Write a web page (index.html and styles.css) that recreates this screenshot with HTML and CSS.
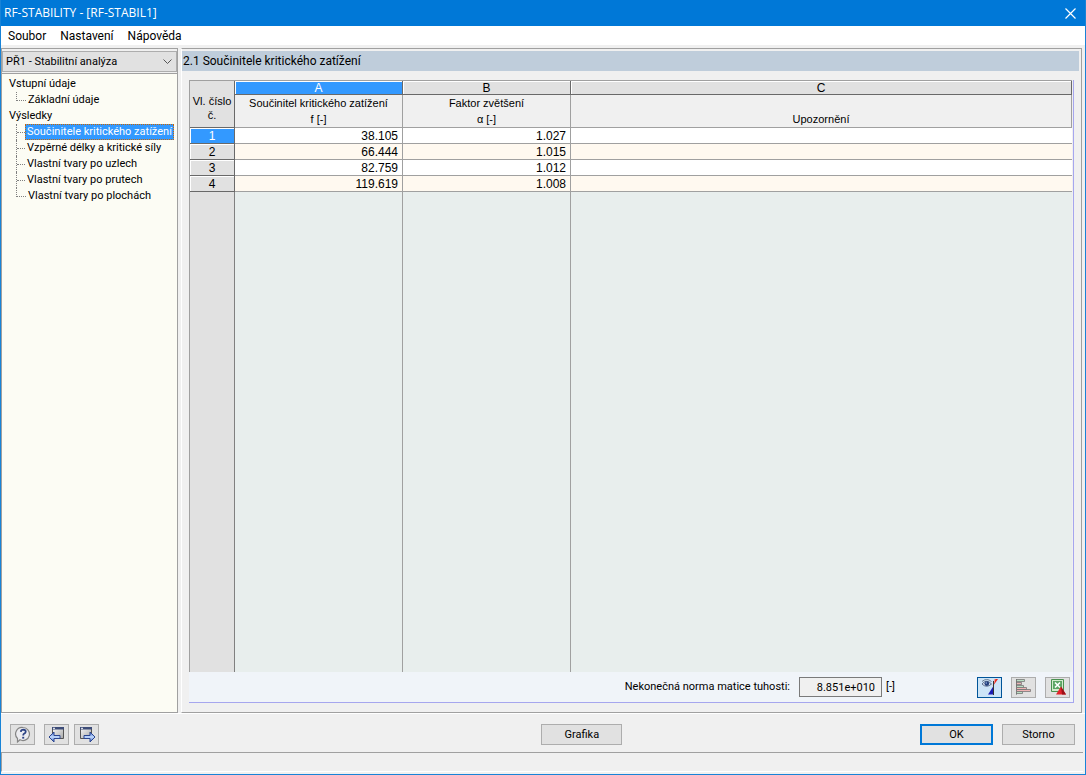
FILE: index.html
```html
<!DOCTYPE html>
<html lang="cs">
<head>
<meta charset="utf-8">
<title>RF-STABILITY - [RF-STABIL1]</title>
<link rel="stylesheet" href="styles.css">
</head>
<body>
<div class="window">
  <header class="titlebar">
    <h1 class="title">RF-STABILITY - [RF-STABIL1]</h1>
    <button class="close" type="button" aria-label="Zavřít">
      <svg width="11" height="11" viewBox="0 0 11 11"><path d="M.5.5l10 10M10.500.5l-10 10" stroke="#fff" stroke-width="1.200"/></svg>
    </button>
  </header>
  <nav class="menubar">
    <button type="button">Soubor</button>
    <button type="button">Nastavení</button>
    <button type="button">Nápověda</button>
  </nav>

  <div class="workspace">
    <aside class="sidebar">
      <div class="combo">
        <select class="combo-select" aria-label="Případ">
          <option>PŘ1 - Stabilitní analýza</option>
        </select>
        <svg class="combo-arrow" width="9" height="6" viewBox="0 0 9 6"><path d="M.5.5l4 4 4-4" fill="none" stroke="#555"/></svg>
      </div>
      <ul class="tree">
        <li><span class="node">Vstupní údaje</span>
          <ul class="branch">
            <li><a class="node" href="#zakladni">Základní údaje</a></li>
          </ul>
        </li>
        <li><span class="node">Výsledky</span>
          <ul class="branch">
            <li><a class="node selected" href="#soucinitele">Součinitele kritického zatížení</a></li>
            <li><a class="node" href="#delky">Vzpěrné délky a kritické síly</a></li>
            <li><a class="node" href="#uzly">Vlastní tvary po uzlech</a></li>
            <li><a class="node" href="#pruty">Vlastní tvary po prutech</a></li>
            <li><a class="node" href="#plochy">Vlastní tvary po plochách</a></li>
          </ul>
        </li>
      </ul>
    </aside>

    <main class="content">
      <h2 class="heading">2.1 Součinitele kritického zatížení</h2>
      <section class="sheet">
        <div class="grid-area">
          <table class="grid">
            <colgroup><col class="col-no"><col class="col-num"><col class="col-num"><col></colgroup>
            <thead>
              <tr class="letters">
                <th class="corner" rowspan="2">Vl. číslo<br>č.</th>
                <th class="active">A</th><th>B</th><th>C</th>
              </tr>
              <tr class="names">
                <th>Součinitel kritického zatížení<br>f [-]</th>
                <th>Faktor zvětšení<br>α [-]</th>
                <th>Upozornění</th>
              </tr>
            </thead>
            <tbody>
              <tr><th class="active">1</th><td>38.105</td><td>1.027</td><td></td></tr>
              <tr><th>2</th><td>66.444</td><td>1.015</td><td></td></tr>
              <tr><th>3</th><td>82.759</td><td>1.012</td><td></td></tr>
              <tr><th>4</th><td>119.619</td><td>1.008</td><td></td></tr>
              <tr class="filler"><td></td><td></td><td></td><td></td></tr>
            </tbody>
          </table>
        </div>
        <div class="sheet-footer">
          <label for="norm">Nekonečná norma matice tuhosti:</label>
          <input class="norm" id="norm" type="text" value="8.851e+010" readonly>
          <span class="unit">[-]</span>
          <button class="icon-button pressed" type="button" aria-label="Výběr v grafice">
            <svg width="18" height="18" viewBox="0 0 18 18">
              <path d="M12 8V4l2-3h3z" fill="#e8281e"/><path d="M12 8l2-7" stroke="#f6a59c"/>
              <path d="M12.500 8v8.500H7z" fill="#1c1cb4"/>
              <path d="M12.500 3v14" stroke="#333"/>
              <path d="M1 6q4.500-5.500 9.500 0-5 4.500-9.500 0z" fill="#e4ecf6" stroke="#5a6e8c"/>
              <circle cx="5.800" cy="5.600" r="2.400" fill="#24407c"/><circle cx="5.200" cy="5" r=".7" fill="#9fc0f0"/>
              <path d="M1 3.500q4.500-4 9.500 0" fill="none" stroke="#6d7d93"/>
            </svg>
          </button>
          <button class="icon-button" type="button" aria-label="Barevné pruhy">
            <svg width="18" height="18" viewBox="0 0 18 18">
              <path d="M1.500 1v15.500" stroke="#555"/>
              <g stroke="#777" stroke-width=".8">
                <path d="M1.500 1.500h8v2h-8zM1.500 7.500h7v2h-7zM1.500 13.500h6v2h-6z" fill="#b9dfc3"/>
                <path d="M1.500 4.500h5v2h-5zM1.500 9.500h10v2h-10zM1.500 11.500h14v2h-14z" fill="#efb4b4"/>
              </g>
            </svg>
          </button>
          <button class="icon-button" type="button" aria-label="Export do Excelu">
            <svg width="18" height="18" viewBox="0 0 18 18">
              <path d="M2.500 1.500h12v12h-12z" fill="#d2ebcc" stroke="#4a9150"/>
              <path d="M4 3h9v8H4z" fill="#5da565"/>
              <path d="M6 4.500l5 5M11 4.500l-5 5" stroke="#fff" stroke-width="1.600"/>
              <path d="M12 8.500l5 8H7z" fill="#e3222a"/><path d="M12 8.500l5 8h-4z" fill="#9c1018"/>
            </svg>
          </button>
        </div>
      </section>
    </main>
  </div>

  <footer class="actions">
    <div class="group tools">
      <button class="icon-button" type="button" aria-label="Nápověda">
        <svg width="18" height="18" viewBox="0 0 18 18">
          <path d="M9 1.500a6.500 6.500 0 1 1-3 12.300L3.500 16v-3.500A6.500 6.500 0 0 1 9 1.500z" fill="#ececf0" stroke="#858585" stroke-width="1.200"/>
          <path d="M6.800 5.800q.3-2.100 2.500-2.100 2.500.1 2.400 2.100-.2 1.300-1.700 2-.8.500-.8 1.600" fill="none" stroke="#2c4384" stroke-width="1.800"/><path d="M8.200 10.800h2v1.800h-2z" fill="#2c4384"/>
        </svg>
      </button>
      <button class="icon-button back" type="button" aria-label="Předchozí">
        <svg width="18" height="18" viewBox="0 0 18 18">
          <defs>
            <linearGradient id="pane" x1="0" y1="0" x2="1" y2="1"><stop offset="0" stop-color="#f4f4f4"/><stop offset="1" stop-color="#a8a8a8"/></linearGradient>
            <linearGradient id="arrow" x1="0" y1="0" x2="0" y2="1"><stop offset="0" stop-color="#3d66c8"/><stop offset=".5" stop-color="#c4dcff"/><stop offset="1" stop-color="#3d66c8"/></linearGradient>
          </defs>
          <path d="M4.500 2.500h11v10h-11z" fill="url(#pane)" stroke="#555"/><path d="M4 1h12v2.500H4z" fill="#3d4c78"/><path d="M5 2.300h2" stroke="#fff"/>
          <path d="M1 11l5-5v3.500h6v3H6V16z" fill="url(#arrow)" stroke="#2b458f"/>
        </svg>
      </button>
      <button class="icon-button" type="button" aria-label="Další">
        <svg width="18" height="18" viewBox="0 0 18 18">
          <path d="M2.500 2.500h11v10h-11z" fill="url(#pane)" stroke="#555"/><path d="M2 1h12v2.500H2z" fill="#3d4c78"/><path d="M3 2.300h2" stroke="#fff"/>
          <path d="M17 11l-5-5v3.500H6v3h6V16z" fill="url(#arrow)" stroke="#2b458f"/>
        </svg>
      </button>
    </div>
    <button class="push" type="button">Grafika</button>
    <div class="group confirm">
      <button class="push primary" type="button">OK</button>
      <button class="push" type="button">Storno</button>
    </div>
  </footer>
  <div class="statusbar"></div>
</div>
</body>
</html>
```
FILE: styles.css
```css
* { box-sizing: border-box; }

body {
  margin: 0;
  color: #000;
  font: 11px/16px Roboto, "Noto Sans", sans-serif;
}

button, input, select { font: inherit; color: inherit; }

.window {
  display: flex;
  flex-direction: column;
  height: 100vh;
  background: #f0f0f0;
  border: 1px solid #1883d7;
  border-top: 0;
}

.titlebar {
  display: flex;
  align-items: center;
  justify-content: space-between;
  height: 26px;
  padding: 0 9px 0 3px;
  background: #0078d7;
  color: #fff;
}

.title { margin: 0; font: 12px/16px "Open Sans", sans-serif; }

.close { display: flex; padding: 0; border: 0; background: none; }

.menubar {
  display: flex;
  gap: 14px;
  height: 19px;
  padding: 1px 7px 0;
  background: #fff;
}

.menubar button {
  padding: 0;
  border: 0;
  background: none;
  font-size: 12px;
  line-height: 18px;
}

.workspace {
  display: flex;
  flex: 1;
  gap: 3px;
  min-height: 0;
  padding: 3px 3px 0 0;
}

.sidebar {
  display: flex;
  flex-direction: column;
  width: 177px;
  border: 1px solid #a0a0a0;
}

.combo {
  display: flex;
  position: relative;
  padding: 2px 0 1px;
  border-bottom: 1px solid #a0a0a0;
}

.combo-select {
  width: 100%;
  height: 21px;
  padding: 1px 20px 0 3px;
  border: 1px solid #adadad;
  border-radius: 0;
  background: #e1e1e1;
  appearance: none;
}

.combo-arrow { position: absolute; right: 5px; top: 10px; pointer-events: none; }

.tree, .branch { margin: 0; padding: 0; list-style: none; }

.tree { flex: 1; padding: 2px 0 0 7px; background: #fcfcf4; }

.tree li { line-height: 16px; }

.node {
  display: block;
  width: max-content;
  height: 16px;
  color: #000;
  text-decoration: none;
  white-space: nowrap;
}

.branch { padding-left: 7px; }

.branch li {
  display: flex;
  border-left: 1px dotted #808080;
}

.branch li::before {
  flex: none;
  width: 8px;
  height: 8px;
  border-bottom: 1px dotted #808080;
  content: "";
}

.branch li:last-child { border-left: 0; }

.branch li:last-child::before { width: 9px; border-left: 1px dotted #808080; }

.branch .node { padding: 0 2px; }

.selected {
  outline: 1px dotted #cc6600;
  outline-offset: -1px;
  background: #3399ff;
}

.branch .selected { color: #fff; }

.content {
  display: flex;
  flex: 1;
  flex-direction: column;
  min-width: 0;
  padding: 2px 2px 9px 0;
  border: 1px solid #a0a0a0;
  border-left-color: #fff;
}

.heading {
  height: 20px;
  margin: 0 0 9px;
  padding-left: 1px;
  background: #bfcddb;
  font-size: 12px;
  font-weight: 400;
  line-height: 20px;
}

.sheet {
  display: flex;
  flex: 1;
  flex-direction: column;
  min-height: 0;
  margin: 0 5px 0 7px;
  border-right: 1px solid #a6a6ee;
  border-bottom: 1px solid #a6a6ee;
}

.grid-area { flex: 1; min-height: 0; margin-right: 1px; }

.grid {
  width: 100%;
  height: 100%;
  border-spacing: 0;
  border: 1px solid #a0a0a0;
  border-width: 1px 0 0 1px;
  table-layout: fixed;
  font: 12px/14px "Liberation Sans", Arial, sans-serif;
}

.col-no { width: 45px; }
.col-num { width: 168px; }

.grid th, .grid td {
  padding: 1px 0 0;
  border: 0 solid #a0a0a0;
  border-width: 0 1px 1px 0;
  font-weight: 400;
}

.letters { height: 14px; }

.letters th {
  border-color: #696969;
  background: #e1e1e1;
  box-shadow: inset 1px 1px #fff;
  line-height: 12px;
}

.names { height: 33px; }

.grid .names th {
  padding: 0;
  background: #f0f0f0;
  font-size: 11px;
  line-height: 16px;
  vertical-align: bottom;
}

.grid .corner {
  padding-top: 8px;
  font-size: 11px;
  line-height: 14px;
  box-shadow: none;
}

.grid tbody tr { height: 16px; }

.grid tbody th {
  padding: 0;
  border-color: #696969;
  background: #e1e1e1;
  box-shadow: inset 1px 1px #fff;
}

.grid .active, .grid tbody .active { background: #3399ff; color: #fff; }

.grid td { padding-right: 4px; background: #fff; text-align: right; }

.grid tr:nth-child(even) td { background: #fff9f0; }

.grid tbody .filler { height: auto; }

.grid .filler td { border-bottom: 0; background: #e8eeed; }

.grid .filler td:first-child { border-color: #808080; background: #e1e1e1; }

.grid .filler td:last-child, .grid td:last-child { border-right: 0; }

.sheet-footer {
  display: flex;
  align-items: center;
  height: 30px;
  padding-right: 3px;
  background: #f0f4f9;
}

.sheet-footer label { margin-left: auto; }

.norm {
  width: 83px;
  height: 20px;
  margin: 0 4px 0 9px;
  padding: 0 6px;
  border: 1px solid #7a7a7a;
  background: #f0f0f0;
  text-align: right;
}

.unit { width: 91px; }

.icon-button {
  display: flex;
  align-items: center;
  justify-content: center;
  width: 25px;
  height: 21px;
  padding: 0;
  border: 1px solid #adadad;
  background: #e1e1e1;
}

.sheet-footer .icon-button + .icon-button { margin-left: 9px; }

.pressed { border-color: #005499; background: #cce4f7; }

.actions {
  display: grid;
  grid-template-columns: 54fr 81px 46fr;
  align-items: center;
  height: 39px;
  padding: 3px 10px 0 9px;
  border-top: 1px solid #fff;
}

.group { display: flex; gap: 5px; }

.back { margin-left: 4px; }

.confirm { justify-content: flex-end; gap: 9px; }

.confirm .push { width: 73px; }

.push {
  height: 21px;
  padding: 0;
  border: 1px solid #adadad;
  background: #e1e1e1;
}

.primary { border: 2px solid #0078d7; }

.statusbar {
  height: 20px;
  margin: 0 2px 2px 0;
  border: 1px solid #a0a0a0;
  border-right: 0;
  border-bottom-color: #fff;
}
```
